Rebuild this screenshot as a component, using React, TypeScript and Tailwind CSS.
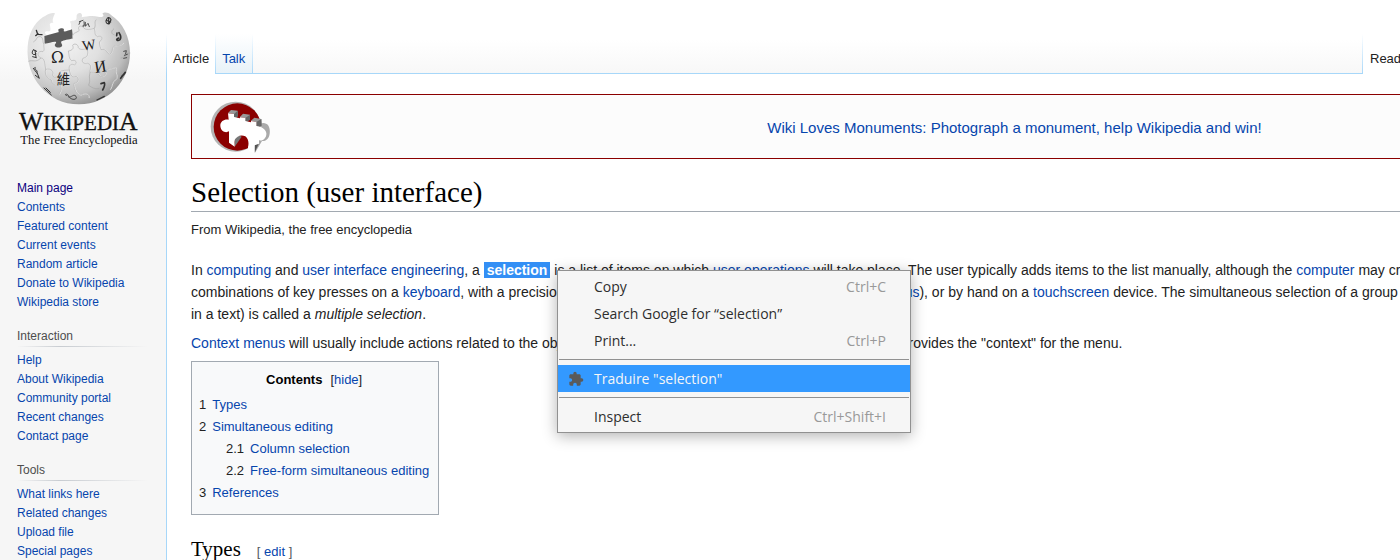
import type { ReactNode } from "react";

function A({ children, className = "text-[#0645ad]" }: { children: ReactNode; className?: string }) {
  return (
    <a href="#" className={className + " hover:underline"}>
      {children}
    </a>
  );
}

function WikipediaLogo() {
  return (
    <svg viewBox="0 0 498 480" className="block h-[160px] w-[166px]" role="img" aria-label="Wikipedia">
      <defs>
        <radialGradient id="globe" cx="0.36" cy="0.3" r="0.8">
          <stop offset="0" stopColor="#f4f4f4" />
          <stop offset="0.45" stopColor="#e0e0e0" />
          <stop offset="0.75" stopColor="#bebebe" />
          <stop offset="1" stopColor="#7d7d7d" />
        </radialGradient>
      </defs>
      <g transform="translate(2 0)">
        <path
          d="M163 40 C148 36 138 46 126 52 C100 70 84 100 81 140 C74 230 140 313 235 313 C325 313 388 240 388 159 C388 110 366 68 331 45 C322 36 310 36 305 41 C314 48 303 54 292 50 C275 46 258 49 243 52 C247 43 240 36 231 41 C225 46 230 53 226 59 C220 64 209 60 208 66 C214 73 208 80 213 88 L216 115 L182 125 L184 140 L163 140 L165 126 L133 130 L131 108 L137 102 C129 100 134 91 141 94 C153 96 149 84 148 77 C145 71 151 66 158 69 C153 60 159 50 163 40Z"
          fill="url(#globe)"
        />
        <path
          d="M131 108 L172 97 C178 96 168 88 177 86 C188 82 192 87 189 93 C190 97 205 91 214 88 L217 115 C204 119 189 121 183 124 C178 128 187 133 184 139 C178 145 166 143 163 138 C160 131 170 129 165 125 C156 124 143 130 132 131Z"
          fill="#5c5c5c"
        />
        <g fill="none" stroke="#f2f2f2" strokeWidth="3">
          <path d="M131 131 C129 145 135 148 128 155 C112 150 108 168 122 174 C133 174 133 187 136 208 C154 203 161 216 157 223 C156 236 174 234 176 224 C175 212 187 211 207 210 C204 194 214 190 223 195 C233 187 226 178 214 182 C205 176 207 164 204 153 C217 151 221 145 217 136 C220 129 235 132 234 143 C239 151 250 148 261 146" />
          <path d="M217 115 C213 97 229 100 237 91 C230 79 241 74 249 82 C255 92 272 88 282 85 C286 99 281 104 292 110 C303 105 309 113 303 121 C292 124 300 140 302 149" />
          <path d="M261 146 C265 166 260 172 249 174 C239 187 254 193 262 190 C276 193 269 207 269 217 C287 215 294 222 302 230 C314 230 319 222 313 215 C320 206 334 207 346 203" />
          <path d="M136 208 C132 225 141 234 153 240 C155 254 168 258 178 254 C188 264 181 273 177 283 M207 210 C211 228 216 234 228 229 C240 238 232 249 221 250 C221 268 229 281 240 286 C255 278 267 282 265 294" />
          <path d="M302 149 C322 145 316 159 328 162 C342 157 331 144 342 139 C352 136 361 138 370 129 M346 203 C344 222 352 224 348 237 C333 245 337 258 329 269" />
        </g>
        <g fill="none" stroke="#a0a0a0" strokeWidth="1.6">
          <path d="M130 131 C128 145 134 148 127 155 C111 150 107 168 121 174 C132 174 132 187 135 208 C153 203 160 216 156 223 C155 236 173 234 175 224 C174 212 186 211 206 210 C203 194 213 190 222 195 C232 187 225 178 213 182 C204 176 206 164 203 153 C216 151 220 145 216 136 C219 129 234 132 233 143 C238 151 249 148 260 146" />
          <path d="M216 115 C212 97 228 100 236 91 C229 79 240 74 248 82 C254 92 271 88 281 85 C285 99 280 104 291 110 C302 105 308 113 302 121 C291 124 299 140 301 149 C321 145 315 159 327 162 C341 157 330 144 341 139 C351 136 360 138 369 129" />
          <path d="M260 146 C264 166 259 172 248 174 C238 187 253 193 261 190 C275 193 268 207 268 217 C286 215 293 222 301 230 C313 230 318 222 312 215 C319 206 333 207 345 203 C343 222 351 224 347 237 C332 245 336 258 328 269" />
          <path d="M135 208 C131 225 140 234 152 240 C154 254 167 258 177 254 C187 264 180 273 176 283 M206 210 C210 228 215 234 227 229 C239 238 231 249 220 250 C220 268 228 281 239 286 C254 278 266 282 264 294" />
          <path d="M281 85 C287 75 279 66 287 59 M98 126 C111 119 106 108 119 110 C130 112 125 132 130 131 M83 184 C98 178 103 190 121 174 M340 86 C329 94 333 104 341 104 M389 159 C374 160 373 175 360 174 M268 217 C263 235 271 240 264 256 C274 263 282 268 296 266" />
        </g>
        <g fill="#202020" fontFamily="'Liberation Serif', 'Noto Sans CJK JP', serif">
          <text x="151" y="188" fontSize="47" fontFamily="'DejaVu Serif', serif" transform="rotate(-3 172 172)">Ω</text>
          <text x="244" y="149" fontSize="43" transform="rotate(-9 266 130)">W</text>
          <text x="281" y="216" fontSize="50" transform="rotate(-9 301 200)">И</text>
          <text x="168" y="253" fontSize="40" fontFamily="'Noto Sans CJK TC', sans-serif">維</text>
        </g>
        <g fill="none" stroke="#333" strokeWidth="3" strokeLinecap="round" strokeLinejoin="round">
          <path d="M107 91 L111 103 L124 104 M112 101 L105 107" strokeWidth="4" />
          <path d="M97 151 C91 159 96 168 106 162 M98 149 L108 154 M96 170 L107 173 M103 151 L106 171" />
          <path d="M98 205 L107 217 M103 202 C100 211 112 207 109 219 M104 226 L116 235 L110 220" />
          <path d="M130 264 L152 285 M136 264 L149 277" />
          <path d="M199 287 C186 285 201 277 204 289 C213 303 232 299 226 289 C218 280 214 293 204 291" strokeWidth="2.5" />
          <path d="M239 64 L235 73 M236 65 L247 61 M249 75 C243 79 248 82 251 76 L250 65 M254 67 L254 79 L262 70 L266 80" strokeWidth="2.5" />
          <path d="M318 58 C312 66 319 73 326 71 L331 59 C328 51 321 50 318 58Z M320 62 L330 66 M324 54 L324 70" strokeWidth="3.5" />
          <path d="M349 99 L348 107 M354 114 C342 119 351 124 358 119 C362 113 359 104 355 98" strokeWidth="5" />
          <path d="M301 251 L311 248 C314 254 311 261 306 270" strokeWidth="5" />
          <path d="M369 154 L377 152 L375 161 M371 166 L380 163 M369 175 L378 173" strokeWidth="2.5" />
          <path d="M374 217 L360 235 M372 220 L363 230" strokeWidth="5" />
          <path d="M311 289 L289 300" strokeWidth="4" />
        </g>
      </g>
      <g fill="#111" fontFamily="'Liberation Serif', serif">
        <text x="57" y="390" stroke="#111" strokeWidth="1">
          <tspan fontSize="77">W</tspan>
          <tspan fontSize="63">IKIPEDI</tspan>
          <tspan fontSize="77">A</tspan>
        </text>
        <text x="61" y="432" fontSize="38">The Free Encyclopedia</text>
      </g>
    </svg>
  );
}

function MonumentIcon() {
  return (
    <svg viewBox="60 27 180 159" className="block h-[53px] w-[60px]" aria-hidden="true">
      <circle cx="137" cy="107" r="75" fill="#b4b4b4" />
      <circle cx="142" cy="108" r="71" fill="#8b0000" />
      <path d="M211 98 C231 91 242 107 239 128 C237 143 227 151 216 150 L195 185 L193 162Z" fill="#aaa" />
      <path d="M206 158 L194 185 L194 160Z" fill="#555" />
      <path d="M134 167 L133 142 C140 134 148 132 155 137Z" fill="#777" />
      <path d="M114 66 L123 57 L143 59 L144 74 L132 84 L132 69Z M149 79 L159 68 L180 71 L180 84 L166 94 L166 81Z M182 90 L193 80 L214 84 L215 101 L199 111 L199 93Z" fill="#999" />
      <path d="M132 69 L143 59 L144 76 L132 86Z M166 81 L180 71 L180 86 L166 96Z M199 93 L214 84 L215 104 L199 112Z" fill="#666" />
      <path d="M114 67 L132 69 L132 78 L150 82 L150 79 L166 81 L166 90 L183 94 L183 90 L199 93 L199 105 C213 106 228 114 229 127 C230 139 220 151 207 148 L207 158 L194 163 L193 185 C181 185 173 178 174 168 C177 158 176 144 166 136 C153 129 140 136 135 145 C132 153 134 160 134 167 L117 155 L117 121 C106 128 91 119 91 104 C90 91 104 83 116 86Z" fill="#fff" />
    </svg>
  );
}

function SideLinks({ items }: { items: string[] }) {
  return (
    <ul>
      {items.map((t) => (
        <li key={t} className="leading-[19px]">
          <A className={t === "Main page" ? "text-[#0b0080]" : "text-[#0645ad]"}>{t}</A>
        </li>
      ))}
    </ul>
  );
}

function SideGroup({ title, items }: { title: string; items: string[] }) {
  return (
    <section className="mt-[14px]">
      <h3 className="h-5 leading-5 text-[#4d4d4d]">{title}</h3>
      <div className="mb-1 h-px bg-linear-to-r from-[#f6f6f6] via-[#c8ccd1] via-33% to-[#f6f6f6]" />
      <SideLinks items={items} />
    </section>
  );
}

function MenuItem({ label, shortcut }: { label: string; shortcut?: string }) {
  return (
    <button type="button" role="menuitem" className="flex h-[27px] w-full items-center justify-between pr-6 pl-9">
      <span>{label}</span>
      {shortcut && <span className="text-[#999]">{shortcut}</span>}
    </button>
  );
}

function ContextMenu() {
  return (
    <div
      role="menu"
      className="absolute top-[270px] left-[557px] w-[354px] border border-[#919191] bg-[#f6f6f6] pt-[2px] pb-[2px] font-['Open_Sans','Noto_Sans',sans-serif] text-sm text-[#2e2e2e] shadow-[0_3px_14px_rgba(0,0,0,0.3)]"
    >
      <MenuItem label="Copy" shortcut="Ctrl+C" />
      <MenuItem label="Search Google for “selection”" />
      <MenuItem label="Print..." shortcut="Ctrl+P" />
      <div role="separator" className="mx-px mt-[5px] mb-[5px] h-px bg-[#919191]" />
      <button type="button" role="menuitem" className="flex h-[27px] w-full items-center bg-[#3399ff] pl-[10px] text-[#f6f6f6]">
        <svg viewBox="0 0 24 24" className="mr-[10px] h-4 w-4 fill-[#5a5a5a]" aria-hidden="true">
          <path d="M20.5 11H19V7c0-1.1-.9-2-2-2h-4V3.500a2.500 2.500 0 0 0-5 0V5H4c-1.100 0-1.990.9-1.990 2v3.800H3.500c1.490 0 2.700 1.210 2.700 2.700s-1.210 2.700-2.700 2.700H2V20c0 1.100.9 2 2 2h3.800v-1.500c0-1.490 1.210-2.700 2.700-2.700s2.700 1.210 2.700 2.700V22H17c1.100 0 2-.9 2-2v-4h1.500a2.500 2.500 0 0 0 0-5z" />
        </svg>
        <span>Traduire "selection"</span>
      </button>
      <div role="separator" className="mx-px mt-[5px] mb-[5px] h-px bg-[#919191]" />
      <MenuItem label="Inspect" shortcut="Ctrl+Shift+I" />
    </div>
  );
}

function TocRow({ n, title, sub }: { n: string; title: string; sub?: boolean }) {
  return (
    <li className={sub ? "pl-[27px]" : ""}>
      <a href="#" className="flex gap-[6px] text-[#0645ad]">
        <span className="text-[#222]">{n}</span>
        <span>{title}</span>
      </a>
    </li>
  );
}

export default function App() {
  return (
    <div className="relative flex h-screen overflow-hidden bg-[#f6f6f6] font-['Liberation_Sans',Arial,sans-serif] text-[#222]">
      <aside className="w-[166px] shrink-0 bg-[linear-gradient(#fff_40px,#f6f6f6_80px)] text-xs">
        <a href="#" className="block">
          <WikipediaLogo />
        </a>
        <nav className="mr-[18px] ml-[17px] pt-[19px]">
          <SideLinks
            items={["Main page", "Contents", "Featured content", "Current events", "Random article", "Donate to Wikipedia", "Wikipedia store"]}
          />
          <SideGroup title="Interaction" items={["Help", "About Wikipedia", "Community portal", "Recent changes", "Contact page"]} />
          <SideGroup title="Tools" items={["What links here", "Related changes", "Upload file", "Special pages"]} />
        </nav>
      </aside>

      <div className="flex min-w-0 flex-1 flex-col">
        <header className="flex bg-[linear-gradient(#fff_40px,#f6f6f6_80px)] pt-[34px] text-[13px]">
          <nav className="flex h-10 flex-1 leading-[50px]">
            <div className="w-px bg-linear-to-b from-white to-[#a7d7f9]" />
            <a href="#" className="bg-white px-[6px]">
              Article
            </a>
            <div className="w-px bg-linear-to-b from-white to-[#a7d7f9]" />
            <a href="#" className="border-b border-[#a7d7f9] bg-linear-to-b from-white to-[#e8f2f8] pr-[7px] pl-[6px] text-[#0645ad]">
              Talk
            </a>
            <div className="w-px bg-linear-to-b from-white to-[#a7d7f9]" />
            <div className="flex-1 border-b border-[#a7d7f9]" />
            <div className="w-px bg-linear-to-b from-white to-[#a7d7f9]" />
            <a href="#" className="w-[37px] overflow-hidden bg-white pl-[7px]">
              Read
            </a>
          </nav>
        </header>

        <main className="flex-1 border-l border-[#a7d7f9] bg-white pt-5 pl-6 whitespace-nowrap">
          <div className="-mr-[439px] flex h-[65px] items-start border border-[#8b0000] bg-[#fcfcfc] pt-[5px] pr-[79px] pl-[18px]">
            <MonumentIcon />
            <a href="#" className="flex-1 text-center text-[15px] leading-[56px] text-[#0645ad]">
              Wiki Loves Monuments: Photograph a monument, help Wikipedia and win!
            </a>
          </div>

          <h1 className="mt-[14px] h-[39px] border-b border-[#a2a9b1] font-['Liberation_Serif',serif] text-[29px] leading-[38px] text-black">
            Selection (user interface)
          </h1>
          <p className="mt-2 text-[13px] leading-5">From Wikipedia, the free encyclopedia</p>

          <p className="mt-[19px] text-sm leading-[22px]">
            In <A>computing</A> and <A>user interface engineering</A>, a{" "}
            <b className="bg-[#338ff5] px-[3px] text-white">selection</b> is a list of items on which <A>user operations</A> will
            take place. The user typically adds items to the list manually, although the <A>computer</A> may create a selection
            <br />
            combinations of key presses on a <A>keyboard</A>, with a precision pointing device (mouse or touchpad and{" "}
            <A>cursor</A>, or <A>stylus</A>), or by hand on a <A>touchscreen</A> device. The simultaneous selection of a group of
            items
            <br />
            in a text) is called a <i>multiple selection</i>.
          </p>
          <p className="mt-[7px] text-sm leading-[22px]">
            <A>Context menus</A> will usually include actions related to the objects included in the current selection and the
            selection provides the "context" for the menu.
          </p>

          <div className="mt-[7px] w-fit border border-[#a2a9b1] bg-[#f8f9fa] pt-[7px] pr-[9px] pb-[10px] pl-[7px] text-[13px] leading-[22px]">
            <div className="flex justify-center gap-2">
              <h2 className="font-bold text-black">Contents</h2>
              <span>
                [<A>hide</A>]
              </span>
            </div>
            <ul className="mt-[3px]">
              <TocRow n="1" title="Types" />
              <TocRow n="2" title="Simultaneous editing" />
              <TocRow n="2.1" title="Column selection" sub />
              <TocRow n="2.2" title="Free-form simultaneous editing" sub />
              <TocRow n="3" title="References" />
            </ul>
          </div>

          <div className="mt-5 flex items-baseline gap-4 border-b border-[#a2a9b1]">
            <h2 className="font-['Liberation_Serif',serif] text-[21px] leading-[28px] text-black">Types</h2>
            <span className="text-[13px] text-[#54595d]">
              [ <A>edit</A> ]
            </span>
          </div>
        </main>
      </div>
      <ContextMenu />
    </div>
  );
}
